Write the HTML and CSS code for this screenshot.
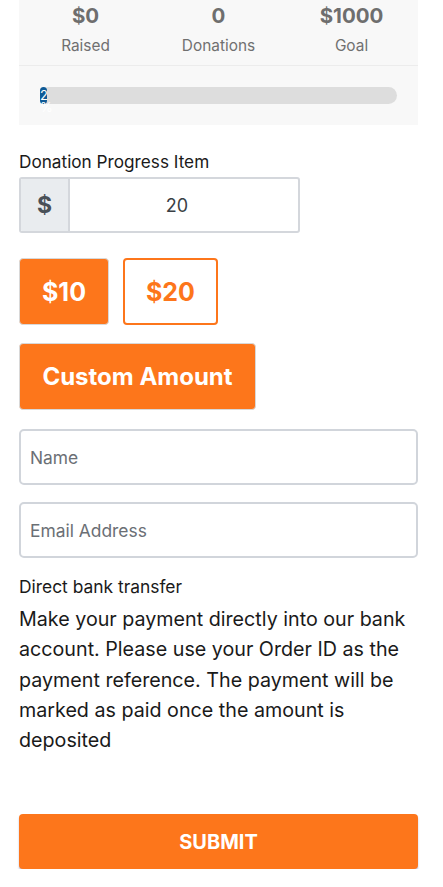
FILE: index.html
```html
<!DOCTYPE html>
<html>
<head>
<meta charset="utf-8">
<link rel="stylesheet" href="styles.css">
</head>
<body>
<div class="wrap">
  <div class="card">
    <div class="stats">
      <div class="stat"><div class="val">$0</div><div class="lbl">Raised</div></div>
      <div class="stat"><div class="val">0</div><div class="lbl">Donations</div></div>
      <div class="stat"><div class="val">$1000</div><div class="lbl">Goal</div></div>
    </div>
    <div class="barwrap">
      <div class="bar"><div class="fill" style="width:2%">2%</div></div>
    </div>
  </div>

  <div class="field-label">Donation Progress Item</div>
  <div class="group">
    <div class="addon">$</div>
    <div class="amount">20</div>
  </div>

  <div class="presets">
    <div class="btn filled small">$10</div>
    <div class="btn outline small">$20</div>
  </div>

  <div class="btn filled custom">Custom Amount</div>

  <div class="input">Name</div>
  <div class="input second">Email Address</div>

  <div class="method">Direct bank transfer</div>
  <p class="desc">Make your payment directly into our bank account. Please use your Order ID as the payment reference. The payment will be marked as paid once the amount is deposited</p>

  <div class="submit">SUBMIT</div>
</div>
</body>
</html>
```
FILE: styles.css
```css
* { box-sizing: border-box; }
body {
  margin: 0;
  font-family: Inter, "Noto Sans", sans-serif;
  background: #fff;
  color: #1a1a1a;
}
.wrap {
  margin-left: 19px;
  width: 399px;
}
.card {
  background: #f8f8f8;
}
.stats {
  display: flex;
  padding: 3px 0 8px;
  border-bottom: 1px solid #ececec;
}
.stat {
  flex: 1;
  text-align: center;
}
.val {
  font-size: 20.5px;
  font-weight: 700;
  line-height: 25px;
  color: #6e6e6e;
}
.lbl {
  margin-top: 7px;
  font-size: 15.4px;
  line-height: 22px;
  color: #707070;
}
.barwrap {
  padding: 21px;
}
.bar {
  height: 17px;
  background: #dddddd;
  border-radius: 9px;
}
.fill {
  height: 17px;
  background: #0f5a96;
  border-radius: 9px;
  color: #fff;
  font-size: 13px;
  line-height: 12px;
  text-align: center;
  padding-top: 2px;
  line-break: anywhere;
  word-break: break-all;
}
.field-label {
  margin-top: 26px;
  font-size: 17.2px;
  line-height: 21px;
  color: #1a1a1a;
}
.group {
  margin-top: 5px;
  width: 281px;
  height: 56px;
  display: flex;
  border: 2px solid #d4d7dc;
  border-radius: 3px;
  overflow: hidden;
}
.addon {
  width: 49px;
  background: #e9ecef;
  border-right: 2px solid #d4d7dc;
  display: flex;
  align-items: center;
  justify-content: center;
  font-size: 23px;
  font-weight: 700;
  color: #495057;
}
.amount {
  flex: 1;
  display: flex;
  align-items: center;
  justify-content: center;
  padding-right: 14px;
  font-size: 18px;
  color: #3a3f45;
}
.presets {
  margin-top: 25px;
  display: flex;
  gap: 14px;
}
.btn {
  display: flex;
  align-items: center;
  justify-content: center;
  font-weight: 700;
  border-radius: 4px;
}
.filled {
  background: #fd761b;
  color: #fff;
  border: 1px solid #d8d8d8;
}
.outline {
  background: #fff;
  color: #fd761b;
  border: 2px solid #fd761b;
}
.small {
  height: 67px;
  font-size: 25px;
}
.presets .filled { width: 90px; }
.presets .outline { width: 95px; }
.custom {
  margin-top: 18px;
  width: 237px;
  height: 67px;
  font-size: 24px;
}
.input {
  margin-top: 19px;
  height: 56px;
  border: 2px solid #d1d5db;
  border-radius: 5px;
  display: flex;
  align-items: center;
  padding-left: 9px;
  font-size: 17.4px;
  color: #6b6f75;
}
.input.second { margin-top: 17px; }
.method {
  margin-top: 18px;
  font-size: 17.4px;
  line-height: 21px;
}
.desc {
  margin: 7px 0 0;
  font-size: 19.7px;
  line-height: 30.3px;
  color: #1a1a1a;
}
.submit {
  margin-top: 59px;
  height: 55px;
  background: #fd761b;
  border-radius: 4px;
  box-shadow: 0 2px 2px rgba(60, 70, 140, 0.35);
  display: flex;
  align-items: center;
  justify-content: center;
  color: #fff;
  font-weight: 700;
  font-size: 20px;
}
```
